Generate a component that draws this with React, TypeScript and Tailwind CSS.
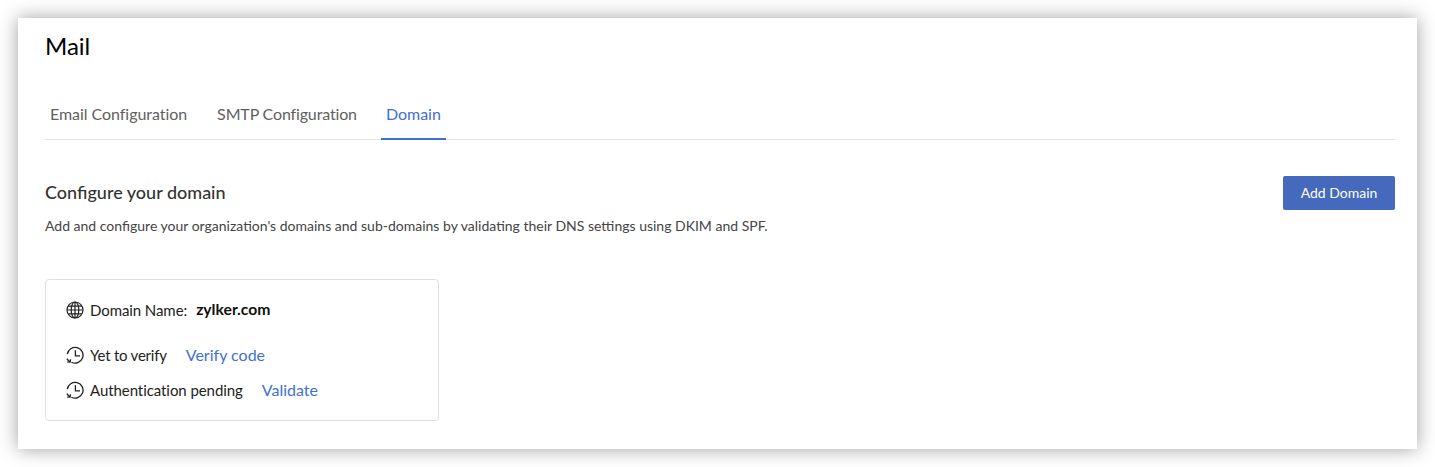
const font = "font-['Lato','Noto_Sans',sans-serif]";

function GlobeIcon() {
  return (
    <svg width="18" height="18" viewBox="0 0 18 18" fill="none" stroke="#222" strokeWidth="1.2" className="shrink-0">
      <circle cx="9" cy="9" r="8" />
      <ellipse cx="9" cy="9" rx="3.8" ry="8" />
      <path d="M9 1v16M1 9h16M2.1 5.2h13.8M2.1 12.8h13.8" />
    </svg>
  );
}

function PendingIcon() {
  return (
    <svg width="18" height="18" viewBox="0 0 18 18" fill="none" stroke="#222" strokeWidth="1.3" className="shrink-0">
      <path d="M1.3 8.2A7.9 7.9 0 1 1 5.4 16.2" />
      <path d="M9.4 4.2v5.6h4.6" />
      <path d="M0.9 12.6c.7 1.3 1.8 2.5 3.3 3.3" />
      <path d="M1.2 16.2l3-.3.3-2.6" />
    </svg>
  );
}

function StatusRow({
  label,
  action,
  className,
  labelClass,
}: {
  label: string;
  action: string;
  className?: string;
  labelClass?: string;
}) {
  return (
    <div className={`flex items-center h-5 ${className ?? ""}`}>
      <PendingIcon />
      <span className={`ml-[6px] text-[15px] text-[#222] ${labelClass ?? ""}`}>{label}</span>
      <a className="ml-[19px] text-base text-[#3f6fd9]">{action}</a>
    </div>
  );
}

export default function App() {
  return (
    <div className={`h-[467px] bg-white pt-[18px] px-[18px] ${font}`}>
      <div className="h-[431px] bg-white pl-[27px] pr-[22px] shadow-[0_0_18px_rgba(0,0,0,0.38)]">
        <h1 className="pt-[13px] text-2xl leading-[30px] text-black">Mail</h1>

        <div className="mt-[31px] flex h-[48px] border-b border-[#e3e3e3]">
          <div className="px-[5px] pt-[10px] text-base tracking-[-0.05px] text-[#5f5f5f]">Email Configuration</div>
          <div className="ml-5 px-[5px] pt-[10px] text-base tracking-[-0.15px] text-[#5f5f5f]">SMTP Configuration</div>
          <div className="ml-[19px] h-[48px] border-b-2 border-[#3f6fd9] px-[5px] pt-[10px] text-base text-[#3f6fd9]">Domain</div>
        </div>

        <div className="mt-9 flex items-start justify-between">
          <div>
            <h2 className="pt-[5px] text-lg font-medium leading-[22px] text-[#333]">Configure your domain</h2>
            <p className="mt-[14px] text-sm leading-[18px] text-[#444]">
              Add and configure your organization's domains and sub-domains by validating their DNS settings using DKIM and SPF.
            </p>
          </div>
          <button className="h-[34px] w-[112px] rounded-[2px] bg-[#4569bd] pb-px text-sm text-white">Add Domain</button>
        </div>

        <div className="mt-[44px] h-[142px] w-[394px] rounded-[4px] border border-[#dfdfdf] pl-[20px] pt-[20px]">
          <div className="flex items-center h-5">
            <GlobeIcon />
            <span className="ml-[6px] text-[15px] tracking-[-0.08px] text-[#222]">Domain Name:</span>
            <span className="ml-[9px] text-[15.7px] font-bold text-[#111]">zylker.com</span>
          </div>
          <StatusRow label="Yet to verify" action="Verify code" className="mt-[25px]" labelClass="tracking-[-0.22px]" />
          <StatusRow label="Authentication pending" action="Validate" className="mt-[15px]" labelClass="tracking-[-0.07px]" />
        </div>
      </div>
    </div>
  );
}
